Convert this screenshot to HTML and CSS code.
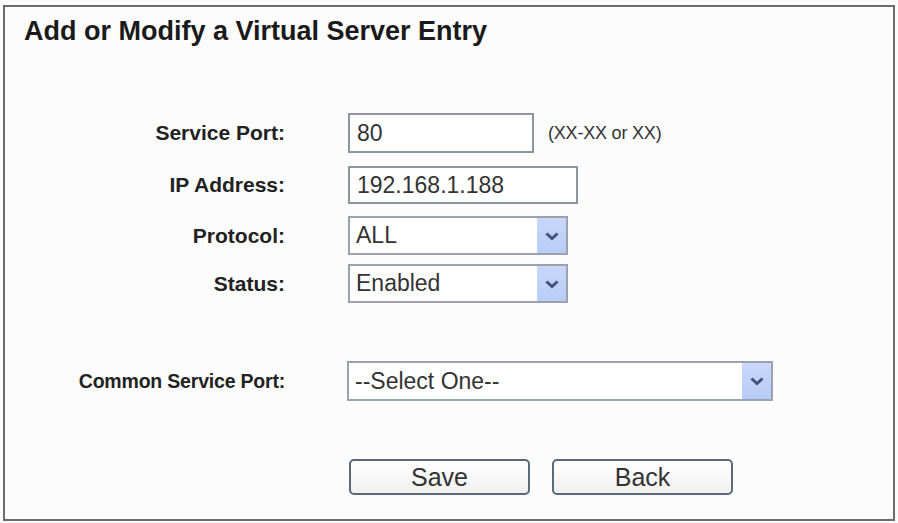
FILE: index.html
```html
<!DOCTYPE html>
<html lang="en">
<head>
    <meta charset="UTF-8">
    <title>Add or Modify a Virtual Server Entry</title>
    <link rel="stylesheet" href="styles.css">
</head>
<body>
    <div class="panel">
        <h1 class="panel-title">Add or Modify a Virtual Server Entry</h1>

        <div class="form-row row-port">
            <label class="field-label">Service Port:</label>
            <div class="text-input input-port">80</div>
            <span class="hint">(XX-XX or XX)</span>
        </div>
        <div class="form-row row-ip">
            <label class="field-label">IP Address:</label>
            <div class="text-input input-ip">192.168.1.188</div>
        </div>
        <div class="form-row row-protocol">
            <label class="field-label">Protocol:</label>
            <div class="select select-short">
                <span class="select-value">ALL</span>
                <span class="select-arrow">
                    <svg width="16" height="10" viewBox="0 0 16 10"><path d="M2.5 2.5 L8 7.5 L13.5 2.5" fill="none" stroke="#3f5279" stroke-width="3"/></svg>
                </span>
            </div>
        </div>
        <div class="form-row row-status">
            <label class="field-label">Status:</label>
            <div class="select select-short">
                <span class="select-value">Enabled</span>
                <span class="select-arrow">
                    <svg width="16" height="10" viewBox="0 0 16 10"><path d="M2.5 2.5 L8 7.5 L13.5 2.5" fill="none" stroke="#3f5279" stroke-width="3"/></svg>
                </span>
            </div>
        </div>
        <div class="form-row row-common">
            <label class="field-label">Common Service Port:</label>
            <div class="select select-wide">
                <span class="select-value">--Select One--</span>
                <span class="select-arrow">
                    <svg width="16" height="10" viewBox="0 0 16 10"><path d="M2.5 2.5 L8 7.5 L13.5 2.5" fill="none" stroke="#3f5279" stroke-width="3"/></svg>
                </span>
            </div>
        </div>

        <div class="button-row">
            <button class="btn">Save</button>
            <button class="btn">Back</button>
        </div>
    </div>
</body>
</html>
```

FILE: styles.css
```css
body {
    margin: 5px 3px 0 3px;
    background-color: #fbfbfb;
    font-family: "Liberation Sans", Arial, sans-serif;
    color: #222;
}
.panel {
    height: 512px;
    border: 2px solid #6b6b6b;
    background-color: #fcfcfc;
    box-sizing: content-box;
}
.panel-title {
    margin: 8px 0 0 19px;
    font-size: 27px;
    line-height: 32px;
    font-weight: bold;
    color: #1a1a1a;
}
.form-row {
    display: flex;
    align-items: center;
    height: 39px;
}
.row-port { margin-top: 66px; height: 40px; }
.row-ip { margin-top: 13px; height: 38px; }
.row-protocol { margin-top: 12px; }
.row-status { margin-top: 9px; }
.row-common { margin-top: 58px; height: 40px; }
.field-label {
    width: 280px;
    margin-right: 63px;
    text-align: right;
    font-size: 21px;
    font-weight: bold;
    color: #222;
}
/* the long label is set a little tighter */
.row-common .field-label {
    margin-right: 62px;
    font-size: 19.5px;
    letter-spacing: -0.2px;
}
.text-input, .select {
    height: 100%;
    box-sizing: border-box;
    border: 2px solid #8d969f;
    background-color: #fff;
    font-size: 23px;
    color: #333;
    display: flex;
    align-items: center;
}
.text-input {
    padding-left: 7px;
}
.input-port { width: 186px; }
.input-ip { width: 230px; }
.hint {
    margin-left: 14px;
    font-size: 18px;
    color: #333;
    letter-spacing: -0.2px;
}
.select {
    justify-content: space-between;
    border-color: #9aa3ad;
}
.select-short { width: 220px; }
.select-wide { width: 426px; }
.select-value {
    padding-left: 6px;
}
.select-arrow {
    width: 29px;
    height: 100%;
    display: flex;
    align-items: center;
    justify-content: center;
    background: linear-gradient(#c8d7fa, #b8ccf6);
}
.button-row {
    display: flex;
    gap: 22px;
    margin: 58px 0 0 344px;
}
.btn {
    width: 181px;
    height: 36px;
    border: 2px solid #5a6a7b;
    border-radius: 5px;
    background: linear-gradient(#ffffff, #f0f0f0);
    font-family: "Liberation Sans", Arial, sans-serif;
    font-size: 25px;
    color: #333;
    padding: 0;
}
```
